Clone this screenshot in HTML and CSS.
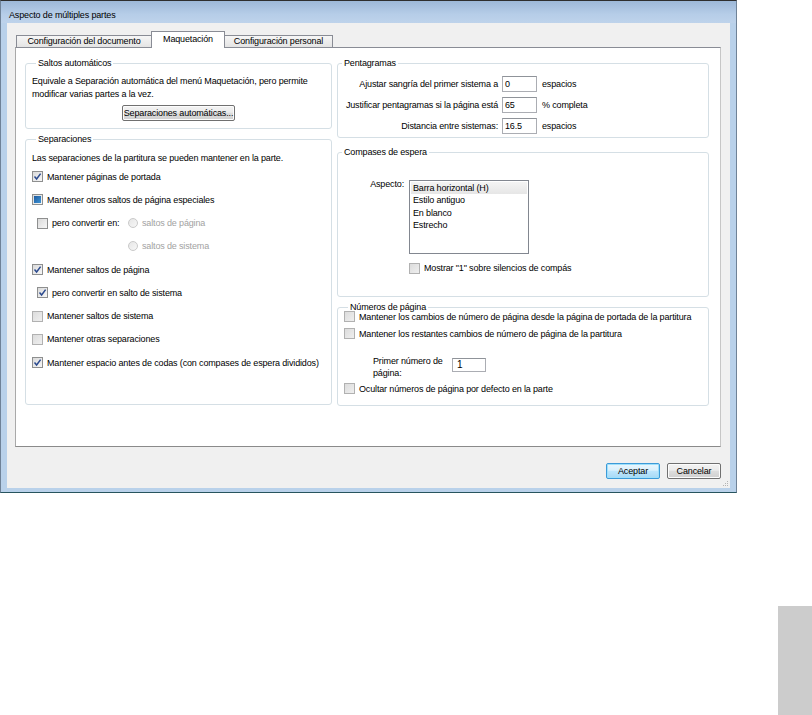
FILE: index.html
```html
<!DOCTYPE html>
<html lang="es">

<head>
    <meta charset="UTF-8">
    <meta name="viewport" content="width=device-width, initial-scale=1.0">
    <title>Aspecto de múltiples partes</title>
    <link rel="stylesheet" href="styles.css">
</head>

<body>
    <div class="window">
        <div class="titlebar">Aspecto de múltiples partes</div>

        <div class="client">
            <div class="tabs">
                <div class="tab tab--first">Configuración del documento</div>
                <div class="tab tab--active">Maquetación</div>
                <div class="tab tab--last">Configuración personal</div>
            </div>

            <div class="panel">
                <!-- columna izquierda -->
                <div class="col col--left">
                    <div class="group group--saltos">
                        <div class="group__title">Saltos automáticos</div>
                        <p class="group__text">Equivale a Separación automática del menú Maquetación, pero permite modificar varias partes a la vez.</p>
                        <div class="btn btn--auto">Separaciones automáticas...</div>
                    </div>

                    <div class="group group--separaciones">
                        <div class="group__title">Separaciones</div>
                        <p class="sep__intro">Las separaciones de la partitura se pueden mantener en la parte.</p>

                        <div class="row">
                            <span class="cb"><svg width="9" height="9" viewBox="0 0 9 9"><path d="M1.5 4.6 L3.6 7 L7.6 1.6" fill="none" stroke="#2b4a8e" stroke-width="1.5"/></svg></span>
                            <span>Mantener páginas de portada</span>
                        </div>
                        <div class="row">
                            <span class="cb cb--mixed"></span>
                            <span>Mantener otros saltos de página especiales</span>
                        </div>
                        <div class="row row--indent">
                            <span class="cb"></span>
                            <span class="convert__label">pero convertir en:</span>
                            <span class="rb"></span>
                            <span class="disabled">saltos de página</span>
                        </div>
                        <div class="row row--radio">
                            <span class="rb"></span>
                            <span class="disabled">saltos de sistema</span>
                        </div>
                        <div class="row">
                            <span class="cb"><svg width="9" height="9" viewBox="0 0 9 9"><path d="M1.5 4.6 L3.6 7 L7.6 1.6" fill="none" stroke="#2b4a8e" stroke-width="1.5"/></svg></span>
                            <span>Mantener saltos de página</span>
                        </div>
                        <div class="row row--indent">
                            <span class="cb"><svg width="9" height="9" viewBox="0 0 9 9"><path d="M1.5 4.6 L3.6 7 L7.6 1.6" fill="none" stroke="#2b4a8e" stroke-width="1.5"/></svg></span>
                            <span>pero convertir en salto de sistema</span>
                        </div>
                        <div class="row">
                            <span class="cb cb--off"></span>
                            <span>Mantener saltos de sistema</span>
                        </div>
                        <div class="row">
                            <span class="cb cb--off"></span>
                            <span>Mantener otras separaciones</span>
                        </div>
                        <div class="row">
                            <span class="cb"><svg width="9" height="9" viewBox="0 0 9 9"><path d="M1.5 4.6 L3.6 7 L7.6 1.6" fill="none" stroke="#2b4a8e" stroke-width="1.5"/></svg></span>
                            <span>Mantener espacio antes de codas (con compases de espera divididos)</span>
                        </div>
                    </div>
                </div>

                <!-- columna derecha -->
                <div class="col col--right">
                    <div class="group group--pentagramas">
                        <div class="group__title">Pentagramas</div>
                        <div class="field-row field-row--first">
                            <span class="field-row__label">Ajustar sangría del primer sistema a</span>
                            <span class="field">0</span>
                            <span class="field-row__unit">espacios</span>
                        </div>
                        <div class="field-row">
                            <span class="field-row__label">Justificar pentagramas si la página está</span>
                            <span class="field">65</span>
                            <span class="field-row__unit">% completa</span>
                        </div>
                        <div class="field-row">
                            <span class="field-row__label">Distancia entre sistemas:</span>
                            <span class="field">16.5</span>
                            <span class="field-row__unit">espacios</span>
                        </div>
                    </div>

                    <div class="group group--compases">
                        <div class="group__title">Compases de espera</div>
                        <div class="aspect">
                            <span class="aspect__label">Aspecto:</span>
                            <div class="listbox">
                                <div class="listbox__item listbox__item--selected">Barra horizontal (H)</div>
                                <div class="listbox__item">Estilo antiguo</div>
                                <div class="listbox__item">En blanco</div>
                                <div class="listbox__item">Estrecho</div>
                            </div>
                        </div>
                        <div class="row row--mostrar">
                            <span class="cb cb--off"></span>
                            <span>Mostrar "1" sobre silencios de compás</span>
                        </div>
                    </div>

                    <div class="group group--numeros">
                        <div class="group__title">Números de página</div>
                        <div class="row row--num row--num-first">
                            <span class="cb cb--off"></span>
                            <span>Mantener los cambios de número de página desde la página de portada de la partitura</span>
                        </div>
                        <div class="row row--num">
                            <span class="cb cb--off"></span>
                            <span>Mantener los restantes cambios de número de página de la partitura</span>
                        </div>
                        <div class="first-num">
                            <span class="first-num__label">Primer número de página:</span>
                            <span class="field field--num">1</span>
                        </div>
                        <div class="row row--num row--num-last">
                            <span class="cb cb--off"></span>
                            <span>Ocultar números de página por defecto en la parte</span>
                        </div>
                    </div>
                </div>
            </div>

            <div class="buttons">
                <div class="btn btn--default">Aceptar</div>
                <div class="btn">Cancelar</div>
            </div>

            <svg class="grip" width="7" height="7" viewBox="0 0 7 7">
                <rect x="5" y="1" width="1" height="1" fill="#b4b4b4"/>
                <rect x="3" y="3" width="1" height="1" fill="#b4b4b4"/>
                <rect x="5" y="3" width="1" height="1" fill="#b4b4b4"/>
                <rect x="1" y="5" width="1" height="1" fill="#b4b4b4"/>
                <rect x="3" y="5" width="1" height="1" fill="#b4b4b4"/>
                <rect x="5" y="5" width="1" height="1" fill="#b4b4b4"/>
            </svg>
        </div>
    </div>

    <div class="side-tab"></div>
</body>

</html>
```

FILE: styles.css
```css
* {
    margin: 0;
    padding: 0;
    box-sizing: border-box;
}

body {
    width: 812px;
    height: 715px;
    overflow: hidden;
    background-color: #fff;
    font-family: "Liberation Sans", Arial, sans-serif;
    font-size: 9px;
    letter-spacing: -0.15px;
    color: #000;
}

/* ventana */
.window {
    width: 737px;
    height: 493px;
    display: flex;
    flex-direction: column;
    background-color: #b9d1ea;
    border: 1px solid #6f8297;
    border-top-color: #2e2e2e;
    border-bottom-color: #27545e;
}

.titlebar {
    height: 22px;
    flex-shrink: 0;
    padding: 6px 0 0 8px;
    line-height: 16px;
    background: linear-gradient(#9db8d8, #b6cde8 60%, #bed3eb);
}

.client {
    position: relative;
    height: 465px;
    margin: 0 6px;
    padding: 8px 9px 0 8px;
    background-color: #f0f0f0;
}

/* pestañas */
.tabs {
    display: flex;
    align-items: flex-end;
    height: 16px;
    padding-left: 1px;
}

.tab {
    height: 12px;
    line-height: 11px;
    text-align: center;
    border: 1px solid #898c95;
    border-bottom: none;
    background: linear-gradient(#f6f6f6, #e4e4e4);
}

.tab--first {
    width: 135px;
    border-right: none;
}

.tab--last {
    width: 108px;
    border-left: none;
}

.tab--active {
    position: relative;
    z-index: 1;
    width: 74px;
    height: 17px;
    margin-bottom: -1px;
    line-height: 15px;
    background: #fff;
}

.panel {
    display: flex;
    gap: 5px;
    width: 706px;
    height: 400px;
    padding: 15px 0 0 9px;
    background-color: #fff;
    border: 1px solid #898c95;
    border-left-color: #a9a9a9;
    border-right-color: #c6c6c6;
    border-bottom-color: #8a8a8a;
}

.col {
    display: flex;
    flex-direction: column;
}

.col--left {
    width: 307px;
    gap: 10px;
}

.col--right {
    width: 372px;
}

/* grupos */
.group {
    border: 1px solid #d5dfe5;
    border-radius: 3px;
}

.group__title {
    width: fit-content;
    margin: -6px 0 0 4px;
    padding: 0 2px;
    line-height: 11px;
    background-color: #fff;
}

.group--saltos {
    height: 66px;
    padding: 0 6px;
}

.group__text {
    margin-top: 6px;
    line-height: 13px;
}

.group--separaciones {
    height: 266px;
    padding-left: 6px;
}

.sep__intro {
    margin-top: 7px;
    line-height: 13px;
}

.group--pentagramas {
    height: 75px;
}

.group--compases {
    height: 145px;
    margin-top: 14px;
}

.group--numeros {
    height: 99px;
    margin-top: 10px;
    padding-left: 6px;
}

/* filas con casilla */
.row {
    display: flex;
    align-items: center;
    gap: 4px;
    height: 23.25px;
    white-space: nowrap;
}

.row--indent {
    padding-left: 5px;
}

.row--radio {
    padding-left: 96px;
}

.convert__label {
    width: 72px;
}

.disabled {
    color: #a2a2a2;
}

.cb {
    display: flex;
    align-items: center;
    justify-content: center;
    flex-shrink: 0;
    width: 11px;
    height: 11px;
    border: 1px solid #8e8f8f;
    background: linear-gradient(135deg, #dadada, #f7f7f7);
}

.cb--off {
    border-color: #b1b1b1;
    background: linear-gradient(135deg, #dcdcdc, #efefef);
}

.cb--mixed::after {
    content: "";
    width: 7px;
    height: 7px;
    background: linear-gradient(135deg, #1d5a9e, #3f95d6);
}

.rb {
    flex-shrink: 0;
    width: 10px;
    height: 10px;
    border-radius: 50%;
    border: 1px solid #c9c9c9;
    background: linear-gradient(135deg, #e6e6e6, #f7f7f7);
}

/* campos */
.field-row {
    display: flex;
    align-items: center;
    height: 16px;
    margin-top: 5px;
    white-space: nowrap;
}

.field-row--first {
    margin-top: 7px;
}

.field-row__label {
    width: 164px;
    padding-right: 4px;
    text-align: right;
}

.field-row__unit {
    margin-left: 5px;
}

.field {
    width: 35px;
    height: 16px;
    padding-left: 2px;
    line-height: 14px;
    background-color: #fff;
    border: 1px solid #abadb3;
    border-top-color: #8f9399;
}

/* aspecto */
.aspect {
    display: flex;
    margin-top: 22px;
}

.aspect__label {
    width: 71px;
    padding-right: 5px;
    text-align: right;
    line-height: 9px;
}

.listbox {
    width: 120px;
    height: 74px;
    padding: 1px 1px 0;
    border: 1px solid #828790;
    background-color: #fff;
}

.listbox__item {
    height: 12.4px;
    padding-left: 2px;
    line-height: 12.4px;
}

.listbox__item--selected {
    background: linear-gradient(#f4f4f4, #e6e6e6);
}

.row--mostrar {
    height: 16px;
    margin-top: 6px;
    padding-left: 71px;
}

/* números de página */
.row--num {
    height: 17px;
}

.row--num-first {
    margin-top: -5px;
}

.row--num-last {
    margin-top: 1px;
}

.first-num {
    display: flex;
    align-items: flex-start;
    margin-top: 13px;
    padding-left: 29px;
}

.first-num__label {
    width: 76px;
    line-height: 12px;
}

.field--num {
    width: 34px;
    height: 14px;
    margin: 3px 0 0 3px;
    padding-left: 4px;
    line-height: 12px;
    font-size: 10px;
}

/* botones */
.btn {
    height: 16px;
    line-height: 14px;
    text-align: center;
    border: 1px solid #707070;
    border-radius: 2px;
    background: linear-gradient(#f3f3f3 0%, #ebebeb 45%, #dddddd 50%, #d0d0d0 100%);
    box-shadow: inset 0 0 0 1px #fcfcfc;
}

.btn--auto {
    width: 113px;
    margin: 4px auto 0;
}

.buttons {
    display: flex;
    justify-content: flex-end;
    gap: 7px;
    margin-top: 16px;
}

.buttons .btn {
    width: 54px;
}

.btn--default {
    border-color: #3c9ad8;
    background: linear-gradient(#eaf6fd 0%, #d9f0fc 45%, #bee6fd 50%, #a7d9f5 100%);
    box-shadow: inset 0 0 0 1px #9fe0fb;
}

.grip {
    position: absolute;
    right: 1px;
    bottom: 1px;
}

.side-tab {
    width: 34px;
    height: 109px;
    margin: 113px 0 0 778px;
    background-color: #ccc;
}
```
